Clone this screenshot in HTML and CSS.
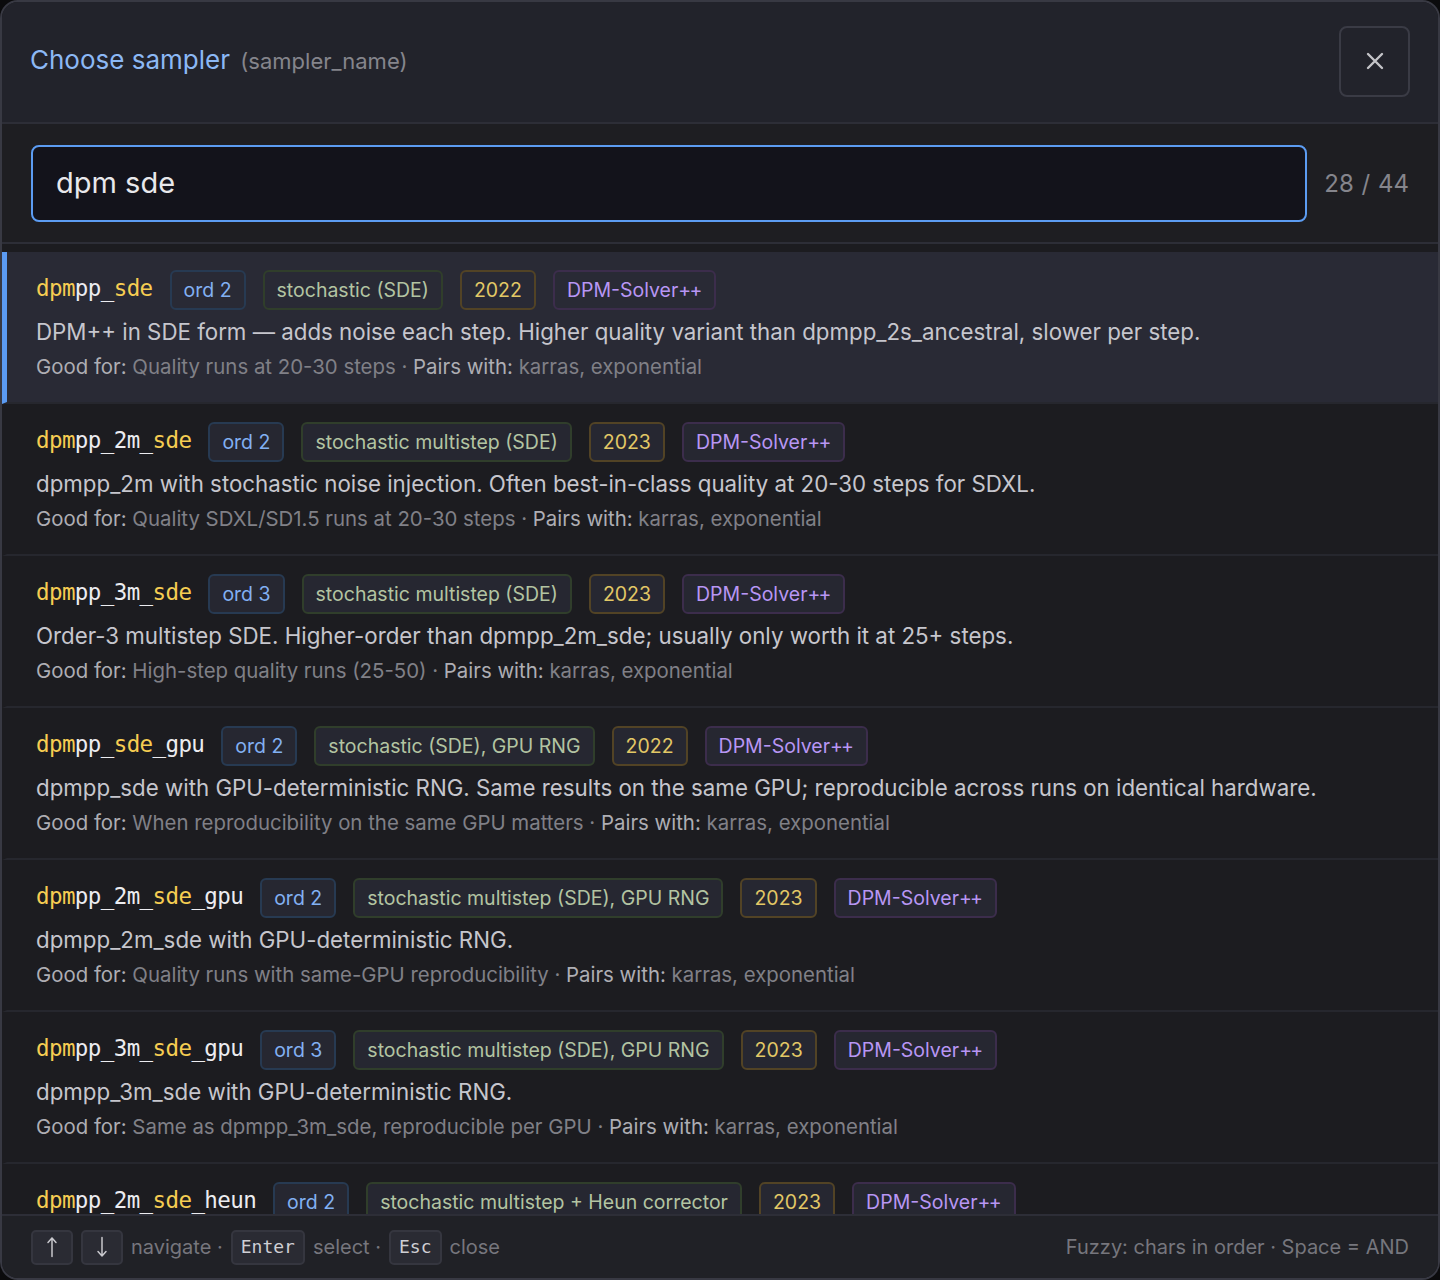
FILE: index.html
```html
<!DOCTYPE html>
<html lang="en">
<head>
<meta charset="utf-8">
<title>Choose sampler</title>
<link rel="stylesheet" href="styles.css">
</head>
<body>
<div class="modal">
  <header class="head">
    <h1 class="title">Choose sampler <span class="sub">(sampler_name)</span></h1>
    <button class="close" aria-label="Close">
      <svg viewBox="0 0 24 24" width="24" height="24"><path d="M5 5 L19 19 M19 5 L5 19" stroke="#c4c4c8" stroke-width="2.4" stroke-linecap="round" fill="none"/></svg>
    </button>
  </header>
  <div class="search">
    <div class="input">dpm sde</div>
    <div class="count">28 / 44</div>
  </div>
  <div class="list">
    <div class="row selected">
      <div class="line1">
        <span class="name"><b>dpm</b>pp_<b>sde</b></span>
        <span class="tag ord">ord 2</span>
        <span class="tag kind">stochastic (SDE)</span>
        <span class="tag year">2022</span>
        <span class="tag fam">DPM-Solver<span class="pp">++</span></span>
      </div>
      <div class="desc">DPM++ in SDE form — adds noise each step. Higher quality variant than dpmpp_2s_ancestral, slower per step.</div>
      <div class="meta"><span class="lbl">Good for:</span> Quality runs at 20-30 steps · <span class="lbl">Pairs with:</span> karras, exponential</div>
    </div>
    <div class="row">
      <div class="line1">
        <span class="name"><b>dpm</b>pp_2m_<b>sde</b></span>
        <span class="tag ord">ord 2</span>
        <span class="tag kind">stochastic multistep (SDE)</span>
        <span class="tag year">2023</span>
        <span class="tag fam">DPM-Solver<span class="pp">++</span></span>
      </div>
      <div class="desc">dpmpp_2m with stochastic noise injection. Often best-in-class quality at 20-30 steps for SDXL.</div>
      <div class="meta"><span class="lbl">Good for:</span> Quality SDXL/SD1.5 runs at 20-30 steps · <span class="lbl">Pairs with:</span> karras, exponential</div>
    </div>
    <div class="row">
      <div class="line1">
        <span class="name"><b>dpm</b>pp_3m_<b>sde</b></span>
        <span class="tag ord">ord 3</span>
        <span class="tag kind">stochastic multistep (SDE)</span>
        <span class="tag year">2023</span>
        <span class="tag fam">DPM-Solver<span class="pp">++</span></span>
      </div>
      <div class="desc">Order-3 multistep SDE. Higher-order than dpmpp_2m_sde; usually only worth it at 25+ steps.</div>
      <div class="meta"><span class="lbl">Good for:</span> High-step quality runs (25-50) · <span class="lbl">Pairs with:</span> karras, exponential</div>
    </div>
    <div class="row">
      <div class="line1">
        <span class="name"><b>dpm</b>pp_<b>sde</b>_gpu</span>
        <span class="tag ord">ord 2</span>
        <span class="tag kind">stochastic (SDE), GPU RNG</span>
        <span class="tag year">2022</span>
        <span class="tag fam">DPM-Solver<span class="pp">++</span></span>
      </div>
      <div class="desc">dpmpp_sde with GPU-deterministic RNG. Same results on the same GPU; reproducible across runs on identical hardware.</div>
      <div class="meta"><span class="lbl">Good for:</span> When reproducibility on the same GPU matters · <span class="lbl">Pairs with:</span> karras, exponential</div>
    </div>
    <div class="row">
      <div class="line1">
        <span class="name"><b>dpm</b>pp_2m_<b>sde</b>_gpu</span>
        <span class="tag ord">ord 2</span>
        <span class="tag kind">stochastic multistep (SDE), GPU RNG</span>
        <span class="tag year">2023</span>
        <span class="tag fam">DPM-Solver<span class="pp">++</span></span>
      </div>
      <div class="desc">dpmpp_2m_sde with GPU-deterministic RNG.</div>
      <div class="meta"><span class="lbl">Good for:</span> Quality runs with same-GPU reproducibility · <span class="lbl">Pairs with:</span> karras, exponential</div>
    </div>
    <div class="row">
      <div class="line1">
        <span class="name"><b>dpm</b>pp_3m_<b>sde</b>_gpu</span>
        <span class="tag ord">ord 3</span>
        <span class="tag kind">stochastic multistep (SDE), GPU RNG</span>
        <span class="tag year">2023</span>
        <span class="tag fam">DPM-Solver<span class="pp">++</span></span>
      </div>
      <div class="desc">dpmpp_3m_sde with GPU-deterministic RNG.</div>
      <div class="meta"><span class="lbl">Good for:</span> Same as dpmpp_3m_sde, reproducible per GPU · <span class="lbl">Pairs with:</span> karras, exponential</div>
    </div>
    <div class="row">
      <div class="line1">
        <span class="name"><b>dpm</b>pp_2m_<b>sde</b>_heun</span>
        <span class="tag ord">ord 2</span>
        <span class="tag kind">stochastic multistep + Heun corrector</span>
        <span class="tag year">2023</span>
        <span class="tag fam">DPM-Solver<span class="pp">++</span></span>
      </div>
      <div class="desc">dpmpp_2m_sde with a Heun corrector step. Sharper detail at a higher cost per step.</div>
      <div class="meta"><span class="lbl">Good for:</span> Detailed runs at 20-30 steps · <span class="lbl">Pairs with:</span> karras, exponential</div>
    </div>
  </div>
  <footer class="foot">
    <div class="keys">
      <span class="key arrow" aria-label="Up"><svg viewBox="0 0 12 22" width="12" height="22"><path d="M6 20.5 V2 M2 6.5 L6 2 L10 6.5" stroke="#c8c8cd" stroke-width="1.5" fill="none" stroke-linecap="round" stroke-linejoin="round"/></svg></span>
      <span class="key arrow" aria-label="Down"><svg viewBox="0 0 12 22" width="12" height="22"><path d="M6 1.5 V20 M2 15.5 L6 20 L10 15.5" stroke="#c8c8cd" stroke-width="1.5" fill="none" stroke-linecap="round" stroke-linejoin="round"/></svg></span>
      <span class="hint">navigate ·</span>
      <span class="key">Enter</span>
      <span class="hint">select ·</span>
      <span class="key">Esc</span>
      <span class="hint">close</span>
    </div>
    <div class="fuzzy">Fuzzy: chars in order · Space = AND</div>
  </footer>
</div>
</body>
</html>
```
FILE: styles.css
```css
* { box-sizing: border-box; }
html, body {
  margin: 0;
  padding: 0;
  background: #0b0b0d;
}
body {
  font-family: Inter, "Noto Sans", sans-serif;
  color: #c8c8cf;
  width: 1440px;
  height: 1280px;
  overflow: hidden;
}
.modal {
  width: 1440px;
  height: 1280px;
  border: 2px solid #383943;
  border-radius: 18px;
  background: #1c1c20;
  overflow: hidden;
  display: flex;
  flex-direction: column;
}
.head {
  flex: none;
  height: 122px;
  background: #22232b;
  border-bottom: 2px solid #2d2e37;
  display: flex;
  align-items: center;
  justify-content: space-between;
  padding: 0 28px 0 28px;
}
.title {
  margin: 0;
  font-size: 26px;
  font-weight: 400;
  color: #8cb8f5;
  letter-spacing: 0;
  padding-bottom: 6px;
}
.sub {
  font-size: 22px;
  color: #85858c;
  margin-left: 3px;
}
.close {
  width: 71px;
  height: 71px;
  margin-bottom: 2px;
  border: 2px solid #3a3b45;
  border-radius: 8px;
  background: #22232b;
  display: flex;
  align-items: center;
  justify-content: center;
  padding: 0;
}
.search {
  flex: none;
  height: 120px;
  background: #1e1e22;
  border-bottom: 2px solid #2d2e37;
  display: flex;
  align-items: center;
  gap: 17px;
  padding: 0 29px;
}
.input {
  flex: 1;
  height: 77px;
  border: 2px solid #5c9cf2;
  border-radius: 8px;
  background: #13131b;
  color: #e8e8ec;
  font-size: 29px;
  display: flex;
  align-items: center;
  padding: 0 23px 2px;
}
.count {
  font-size: 24px;
  color: #85858c;
  word-spacing: 1px;
}
.list {
  flex: 1;
  min-height: 0;
  overflow: hidden;
  padding-top: 8px;
  background: #1c1c20;
}
.row {
  border-left: 5px solid transparent;
  border-bottom: 2px solid #26272e;
  padding: 18px 29px 21px 29px;
}
.row.selected {
  background: #292a35;
  border-left-color: #5b9bf3;
}
.line1 {
  display: flex;
  align-items: center;
  gap: 17px;
  height: 40px;
}
.name {
  font-family: "DejaVu Sans Mono", monospace;
  font-size: 22.5px;
  letter-spacing: -0.6px;
  color: #ececf0;
  padding-bottom: 4px;
}
.name b {
  font-weight: 400;
  color: #f6cd52;
}
.tag {
  height: 40px;
  display: inline-flex;
  align-items: center;
  padding: 0 12px 1px;
  border: 2px solid;
  border-radius: 6px;
  font-size: 19.5px;
  background: #262731;
}
.selected .tag { background: #292a35; }
.ord { border-color: #273a52; color: #82b0f2; }
.kind { border-color: #303e2b; color: #b3c4a2; }
.year { border-color: #524325; color: #e2c866; }
.fam { border-color: #3c2d4c; color: #b896f4; }
.pp { letter-spacing: -1.8px; margin-right: 1.8px; }
.desc {
  margin-top: 6px;
  line-height: 32px;
  font-size: 22.3px;
  color: #c6c6cd;
  white-space: nowrap;
}
.meta {
  margin-top: 5px;
  line-height: 28px;
  font-size: 20.4px;
  color: #808087;
  white-space: nowrap;
}
.meta .lbl { color: #aeaeb4; }
.foot {
  flex: none;
  height: 64px;
  background: #202126;
  border-top: 2px solid #2d2e37;
  display: flex;
  align-items: center;
  justify-content: space-between;
  padding: 0 29px;
}
.keys {
  display: flex;
  align-items: center;
  gap: 8px;
}
.key {
  font-family: "DejaVu Sans Mono", monospace;
  font-size: 18px;
  line-height: 1;
  color: #cfcfd4;
  height: 35px;
  min-width: 42px;
  padding: 0 8px 1px;
  display: inline-flex;
  align-items: center;
  justify-content: center;
  background: #2a2b33;
  border: 2px solid #35363f;
  border-radius: 5px;
}
.key svg { display: block; }
.hint {
  font-size: 20px;
  color: #76767d;
}
.fuzzy {
  font-size: 20px;
  color: #76767d;
}
```
